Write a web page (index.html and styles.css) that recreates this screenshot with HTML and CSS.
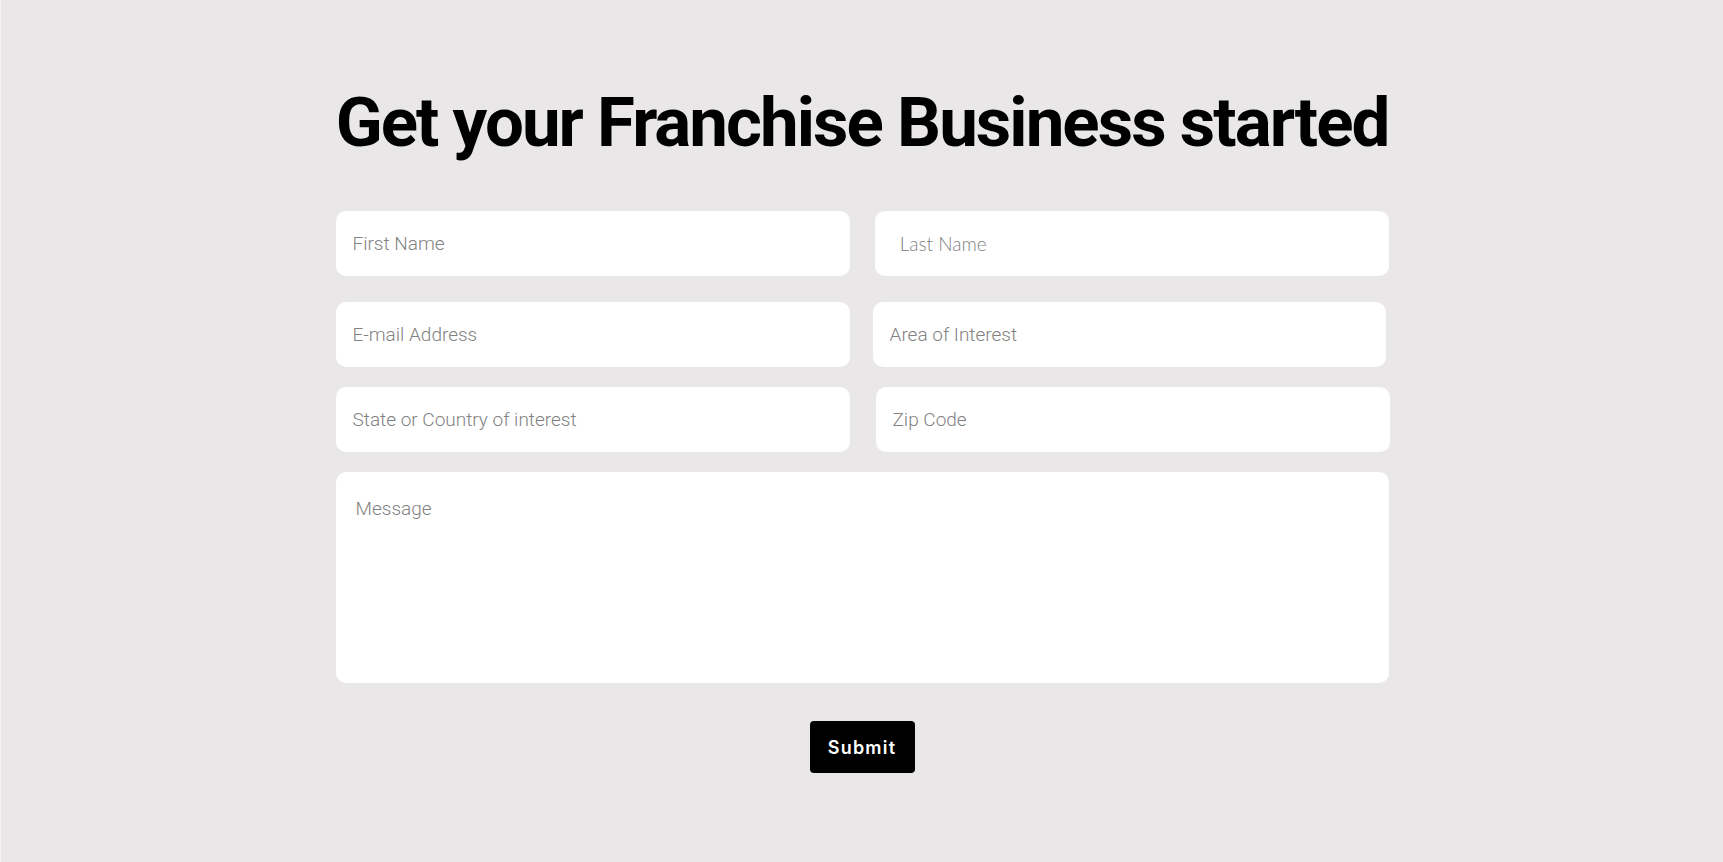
FILE: index.html
```html
<!DOCTYPE html>
<html lang="en">
<head>
    <meta charset="UTF-8">
    <meta name="viewport" content="width=device-width, initial-scale=1.0">
    <title>Franchise Enquiry</title>
    <link rel="stylesheet" href="styles.css">
</head>
<body>
    <main class="page">
        <h1 class="title">Get your Franchise Business started</h1>
        <form id="franchiseForm" class="franchise-form">
            <div class="row row-first">
                <input type="text" name="firstName" placeholder="First Name">
                <input type="text" name="lastName" class="field-last" placeholder=" Last Name">
            </div>
            <div class="row">
                <input type="email" name="email" placeholder="E-mail Address">
                <input type="text" name="interest" class="field-area" placeholder="Area of Interest">
            </div>
            <div class="row">
                <input type="text" name="region" placeholder="State or Country of interest">
                <input type="text" name="zip" class="field-zip" placeholder="Zip Code">
            </div>
            <textarea name="message" placeholder="Message"></textarea>
            <div class="actions">
                <button type="submit">Submit</button>
            </div>
        </form>
    </main>
</body>
</html>
```

FILE: styles.css
```css
body {
    margin: 0;
    background-color: #e9e7e8;
    border-left: 1px solid #f4f3f4;
    min-height: 862px;
    box-sizing: border-box;
    font-family: Roboto, "Liberation Sans", sans-serif;
}
.page {
    width: 1053px;
    margin: 0 auto;
    padding-top: 88px;
}
.title {
    margin: 0 0 54px;
    font-size: 69px;
    font-weight: 700;
    line-height: 1;
    text-align: center;
    color: #000;
    letter-spacing: -1.95px;
    white-space: nowrap;
}
.row {
    display: grid;
    grid-template-columns: 1fr 1fr;
    column-gap: 25px;
    margin-bottom: 20px;
}
.row-first {
    margin-bottom: 26px;
}
input, textarea {
    display: block;
    box-sizing: border-box;
    width: 100%;
    border: none;
    border-radius: 10px;
    background-color: #fff;
    font-family: Roboto, "Liberation Sans", sans-serif;
    font-weight: 300;
    font-size: 19px;
    color: #333;
    outline: none;
}
input {
    height: 65px;
    padding: 0 17px;
}
input::placeholder, textarea::placeholder {
    color: #828282;
    opacity: 1;
}
.field-last {
    font-family: Lato, Roboto, sans-serif;
    padding-left: 20px;
}
.field-area {
    margin-left: -2px;
    width: calc(100% - 1px);
}
.field-zip {
    margin-left: 1px;
}
textarea {
    height: 211px;
    margin-top: 1px;
    padding: 25px 20px;
    resize: none;
}
.actions {
    display: flex;
    justify-content: center;
    margin-top: 38px;
}
button {
    width: 105px;
    height: 52px;
    background-color: #000;
    color: #fff;
    border: none;
    border-radius: 4px;
    font-family: Inter, "Open Sans", sans-serif;
    font-weight: 600;
    font-size: 18px;
    letter-spacing: 1.2px;
    cursor: pointer;
}
```
